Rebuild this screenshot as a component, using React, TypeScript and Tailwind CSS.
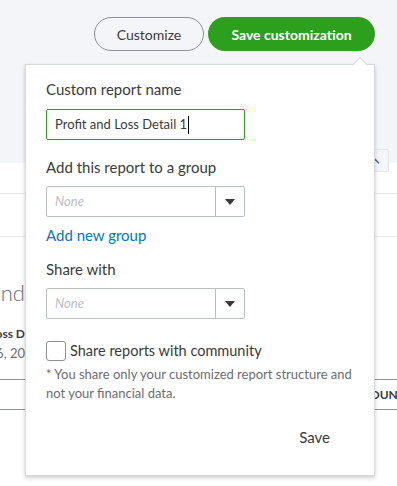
import { ChevronUp } from "lucide-react";

function Select() {
    return (
        <div className="flex h-[31px] w-[199px] rounded-[2px] border border-[#babec5] bg-white">
            <div className="flex flex-1 items-center pl-[8px] text-[13px] italic text-[#babec5]">None</div>
            <div className="flex w-[29px] items-center justify-center border-l border-[#babec5]">
                <div className="h-0 w-0 border-x-[5px] border-t-[6px] border-x-transparent border-t-[#393a3d]" />
            </div>
        </div>
    );
}

export default function App() {
    return (
        <div className="relative h-[486px] w-[397px] overflow-hidden bg-white font-['Lato',sans-serif] text-[#393a3d]">
            <div className="flex h-[163px] items-start justify-end gap-[4px] bg-[#f4f5f8] pr-[22px] pt-[17px]">
                <button type="button" className="h-[34px] w-[110px] rounded-full border border-[#8d9096] text-[14px] text-[#393a3d]">
                    Customize
                </button>
                <button type="button" className="h-[34px] w-[167px] rounded-full bg-[#2ca01c] text-[14px] font-bold text-white">
                    Save customization
                </button>
            </div>

            <div className="absolute left-[361px] top-[149px] flex h-[23px] w-[28px] items-center justify-center rounded-[2px] border border-[#e3e5e8] bg-[#f4f5f8]">
                <ChevronUp size={14} strokeWidth={3} className="text-[#4a6fbf]" />
            </div>

            <div className="mt-[30px] border-t border-[#e3e5e8]" />
            <div className="mt-[42px] border-t border-[#e3e5e8]" />

            <div className="mt-[42px] flex w-[25px] justify-end overflow-hidden whitespace-nowrap">
                <span className="text-[22px] font-light leading-[28px] text-[#6b6c72]">Craig's Design and</span>
            </div>
            <div className="mt-[19px] flex w-[25px] justify-end overflow-hidden whitespace-nowrap">
                <span className="text-[12px] font-bold leading-[16px] text-[#393a3d]">Profit and Loss D</span>
            </div>
            <div className="mt-[2px] flex w-[25px] justify-end overflow-hidden whitespace-nowrap">
                <span className="text-[13px] leading-[18px] text-[#6b6c72]">October 16, 20</span>
            </div>

            <div className="mt-[17px] flex h-[31px] items-center justify-end overflow-hidden border-y border-[#8d9096] whitespace-nowrap">
                <span className="mr-[-8px] text-[12px] font-bold text-[#393a3d]">AMOUNT</span>
            </div>

            <div className="absolute left-[25px] top-[64px] h-[412px] w-[350px] border border-[#d4d7dc] bg-white pl-[20px] pr-[18px] pt-[13px] shadow-[0_2px_4px_rgba(0,0,0,0.2)]">
                <div className="absolute right-[9px] top-[-6px] h-[10px] w-[10px] rotate-45 border-l border-t border-[#d4d7dc] bg-white" />

                <div className="text-[15px] leading-[22px]">Custom report name</div>
                <div className="mt-[9px] flex h-[31px] w-[199px] items-center rounded-[2px] border border-[#2ca01c] pl-[8px] text-[13px]">
                    Profit and Loss Detail 1
                    <span className="ml-[1px] h-[18px] w-[1px] bg-[#000]" />
                </div>

                <div className="mt-[16px] text-[15px] leading-[22px]">Add this report to a group</div>
                <div className="mt-[8px]">
                    <Select />
                </div>
                <div className="mt-[7px] text-[15px] leading-[22px] text-[#0077c5]">Add new group</div>

                <div className="mt-[12px] text-[15px] leading-[22px]">Share with</div>
                <div className="mt-[8px]">
                    <Select />
                </div>

                <div className="mt-[21px] flex items-center gap-[4px]">
                    <div className="h-[20px] w-[20px] rounded-[3px] border border-[#8d9096] bg-white" />
                    <span className="text-[14.5px] leading-[22px]">Share reports with community</span>
                </div>
                <div className="mt-[3px] text-[13px] leading-[19px] text-[#6b6c72]">
                    * You share only your customized report structure and not your financial data.
                </div>

                <div className="mt-[23px] flex justify-end pr-[26px]">
                    <span className="text-[15px] leading-[22px]">Save</span>
                </div>
            </div>
        </div>
    );
}
